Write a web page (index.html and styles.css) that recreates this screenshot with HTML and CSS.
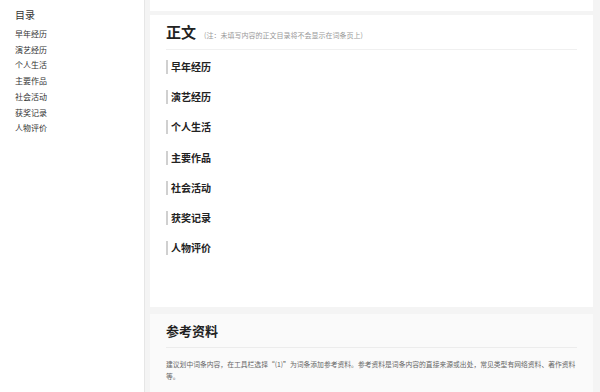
FILE: index.html
```html
<!DOCTYPE html>
<html lang="zh">
<head>
<meta charset="utf-8">
<link rel="stylesheet" href="styles.css">
</head>
<body>
<div class="page">
  <aside class="toc">
    <div class="toc-title">目录</div>
    <ul class="toc-list">
      <li>早年经历</li>
      <li>演艺经历</li>
      <li>个人生活</li>
      <li>主要作品</li>
      <li>社会活动</li>
      <li>获奖记录</li>
      <li>人物评价</li>
    </ul>
  </aside>
  <main class="main">
    <div class="card card-top"></div>
    <section class="card card-body">
      <div class="head">
        <h2 class="head-title">正文</h2>
        <span class="head-note">(注：未填写内容的正文目录将不会显示在词条页上)</span>
      </div>
      <div class="sections">
        <h3 class="sec">早年经历</h3>
        <h3 class="sec">演艺经历</h3>
        <h3 class="sec">个人生活</h3>
        <h3 class="sec">主要作品</h3>
        <h3 class="sec">社会活动</h3>
        <h3 class="sec">获奖记录</h3>
        <h3 class="sec">人物评价</h3>
      </div>
    </section>
    <section class="card card-ref">
      <h2 class="ref-title">参考资料</h2>
      <p class="ref-text">建议划中词条内容，在工具栏选择“(1)”为词条添加参考资料。参考资料是词条内容的直接来源或出处，常见类型有网络资料、著作资料等。</p>
    </section>
  </main>
</div>
</body>
</html>
```
FILE: styles.css
```css
* { box-sizing: border-box; margin: 0; padding: 0; }
html, body { height: 100%; }
body {
  background: #f4f4f4;
  font-family: "Noto Sans CJK SC", "Noto Sans", sans-serif;
  color: #333;
  overflow: hidden;
}
.page {
  display: flex;
  height: 392px;
}
.toc {
  width: 145px;
  background: #fff;
  border-right: 1px solid #e6e6e6;
  padding: 8px 0 0 15px;
}
.toc-title {
  font-size: 10px;
  line-height: 14px;
  color: #333;
  margin-bottom: 4px;
}
.toc-list {
  list-style: none;
}
.toc-list li {
  font-size: 8px;
  line-height: 15.7px;
  color: #333;
}
.main {
  width: 443px;
  margin-left: 5px;
  display: flex;
  flex-direction: column;
}
.card { background: #fff; }
.card-top {
  height: 11px;
  margin-bottom: 4px;
}
.card-body {
  height: 292px;
  padding: 0 16px;
}
.head {
  display: flex;
  align-items: baseline;
  gap: 8px;
  padding-top: 7px;
  height: 35px;
  border-bottom: 1px solid #f0f0f0;
}
.head-title {
  font-size: 15px;
  font-weight: 700;
  line-height: 20px;
  color: #222;
}
.head-note {
  font-size: 7px;
  color: #999;
}
.sections {
  display: flex;
  flex-direction: column;
  padding-top: 10px;
  gap: 16.2px;
}
.sec {
  font-size: 10px;
  font-weight: 700;
  line-height: 14px;
  color: #222;
  border-left: 2px solid #d0d0d0;
  padding-left: 3px;
  height: 14px;
}
.card-ref {
  margin-top: 7px;
  background: #fafafa;
  padding: 0 16px;
  flex: 1;
}
.ref-title {
  font-size: 13px;
  font-weight: 700;
  line-height: 18px;
  color: #222;
  padding: 8px 0 7px;
  border-bottom: 1px solid #ececec;
}
.ref-text {
  font-size: 6.8px;
  line-height: 12px;
  color: #666;
  padding-top: 10px;
}
```
